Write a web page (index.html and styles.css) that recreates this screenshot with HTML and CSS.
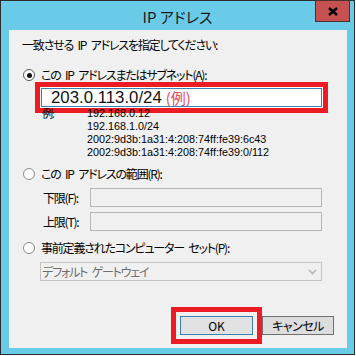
FILE: index.html
```html
<!DOCTYPE html>
<html lang="ja">
<head>
    <meta charset="UTF-8">
    <meta name="viewport" content="width=device-width, initial-scale=1.0">
    <title>IP アドレス</title>
    <link rel="stylesheet" href="styles.css">
</head>
<body>
    <div class="window">
        <div class="titlebar">
            <span class="title">IP アドレス</span>
            <div class="close">
                <svg width="10" height="9" viewBox="0 0 10 9"><path d="M1 1 L9 8 M9 1 L1 8" stroke="#000" stroke-width="2.4" fill="none"/></svg>
            </div>
        </div>

        <div class="content">
            <p class="intro">一致させる IP アドレスを指定してください:</p>

            <div class="option first">
                <span class="radio checked"></span>
                <span>この IP アドレスまたはサブネット(A):</span>
            </div>
            <div class="entry">
                <span class="value">203.0.113.0/24</span><span class="hint">(例)</span>
            </div>
            <div class="examples">
                <span class="ex-label">例:</span>
                <div class="ex-list">
                    <div>192.168.0.12</div>
                    <div>192.168.1.0/24</div>
                    <div>2002:9d3b:1a31:4:208:74ff:fe39:6c43</div>
                    <div>2002:9d3b:1a31:4:208:74ff:fe39:0/112</div>
                </div>
            </div>

            <div class="option second">
                <span class="radio"></span>
                <span>この IP アドレスの範囲(R):</span>
            </div>
            <div class="range-row first-range">
                <span class="range-label">下限(F):</span>
                <div class="field"></div>
            </div>
            <div class="range-row">
                <span class="range-label">上限(T):</span>
                <div class="field"></div>
            </div>

            <div class="option third">
                <span class="radio"></span>
                <span>事前定義されたコンピューター セット(P):</span>
            </div>
            <div class="select">
                <span>デフォルト ゲートウェイ</span>
                <svg width="9" height="6" viewBox="0 0 9 6"><path d="M1 1 L4.5 4.5 L8 1" stroke="#b4b4b4" stroke-width="1.6" fill="none"/></svg>
            </div>

            <div class="buttons">
                <button class="btn ok">OK</button>
                <button class="btn">キャンセル</button>
            </div>
        </div>
    </div>
</body>
</html>
```

FILE: styles.css
```css
body {
    margin: 0;
    background: #fff;
    font-family: "Noto Sans CJK JP", "Noto Sans", sans-serif;
    font-size: 12px;
    color: #000;
    font-feature-settings: "palt";
    letter-spacing: -1.2px;
    word-spacing: 3px;
}
.window {
    width: 355px;
    height: 355px;
    box-sizing: border-box;
    border: 1px solid #2b2b2b;
    background: #6acbe8;
    display: flex;
    flex-direction: column;
    position: relative;
}
.titlebar {
    height: 29px;
    display: flex;
    align-items: center;
    justify-content: center;
}
.title {
    font-size: 15px;
    color: #1a1a1a;
    padding-top: 2px;
    letter-spacing: 0;
    word-spacing: 0;
}
.close {
    position: absolute;
    top: -1px;
    right: 4px;
    width: 35px;
    height: 22px;
    box-sizing: border-box;
    border: 1px solid #4a3030;
    background: #c75050;
    display: flex;
    align-items: center;
    justify-content: center;
}
.content {
    flex: 1;
    margin: 0 7px 6px 8px;
    padding: 8px 13px 13px;
    background: #f0f0f0;
    display: flex;
    flex-direction: column;
}
.intro {
    margin: 0;
    line-height: 14px;
}
.option {
    display: flex;
    align-items: center;
    height: 14px;
    line-height: 14px;
}
.option.first { margin-top: 16px; }
.option.second { margin-top: 8px; }
.option.third { margin-top: 10px; }
.radio {
    width: 12px;
    height: 12px;
    box-sizing: border-box;
    border: 1px solid #8c8c8c;
    border-radius: 50%;
    background: #fff;
    margin: 0 6px 0 1px;
    display: flex;
    align-items: center;
    justify-content: center;
}
.radio.checked {
    border-color: #555;
}
.radio.checked::after {
    content: "";
    width: 5px;
    height: 5px;
    border-radius: 50%;
    background: #111;
}
.entry {
    margin: 6px 0 0 19px;
    width: 281px;
    height: 19px;
    box-sizing: border-box;
    border: 1px solid #3c7fb1;
    background: #fff;
    box-shadow: 0 0 0 1px #fff;
    outline: 5px solid #ed1c24;
    outline-offset: 1px;
    padding-left: 9px;
    display: flex;
    align-items: center;
    letter-spacing: 0;
    word-spacing: 0;
}
.value {
    font-family: "Liberation Sans", Arial, sans-serif;
    font-size: 16.8px;
    line-height: 17px;
    color: #111;
}
.hint {
    font-size: 15px;
    line-height: 17px;
    color: #e84a5f;
    margin-left: 4px;
}
.examples {
    margin-left: 20px;
    display: flex;
    line-height: 13px;
}
.ex-label {
    width: 45px;
    font-size: 11px;
}
.ex-list {
    font-family: "Liberation Sans", Arial, sans-serif;
    font-size: 10.8px;
    letter-spacing: 0;
    word-spacing: 0;
}
.range-row {
    display: flex;
    align-items: center;
    padding-left: 21px;
    margin-top: 5px;
}
.range-row.first-range { margin-top: 7px; }
.range-label {
    width: 47px;
}
.field {
    width: 232px;
    height: 19px;
    box-sizing: border-box;
    border: 1px solid #b4b4b4;
    background: #f0f0f0;
}
.select {
    margin: 7px 0 0 18px;
    width: 282px;
    height: 19px;
    box-sizing: border-box;
    border: 1px solid #c3c3c3;
    background: #f0f0f0;
    color: #6d6d6d;
    padding: 0 4px 0 1px;
    display: flex;
    align-items: center;
    justify-content: space-between;
}
.buttons {
    margin-top: auto;
    display: flex;
    justify-content: flex-end;
    gap: 9px;
}
.btn {
    width: 72px;
    height: 19px;
    box-sizing: border-box;
    border: 1px solid #707070;
    background: #dddddd;
    font-family: "Noto Sans CJK JP", "Noto Sans", sans-serif;
    font-size: 12px;
    font-feature-settings: "palt";
    letter-spacing: -0.5px;
    color: #000;
    padding: 0;
    line-height: 16px;
}
.btn.ok {
    width: 73px;
    letter-spacing: 0;
    border-color: #3c7fb1;
    background: #e1e1e1;
    outline: 5px solid #ed1c24;
    outline-offset: 4px;
}
```
